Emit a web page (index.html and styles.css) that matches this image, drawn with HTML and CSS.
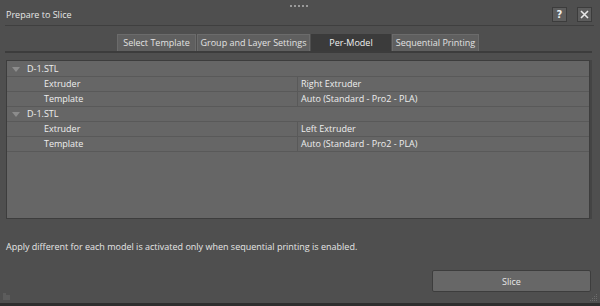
FILE: index.html
```html
<!DOCTYPE html>
<html lang="en">
<head>
    <meta charset="UTF-8">
    <title>Prepare to Slice</title>
    <link rel="stylesheet" href="styles.css">
</head>
<body>
    <div class="dialog">
        <svg class="grip" width="18" height="4" viewBox="0 0 18 4">
            <rect x="0" y="1" width="2" height="2" fill="#9a9a9a"/>
            <rect x="4" y="1" width="2" height="2" fill="#9a9a9a"/>
            <rect x="8" y="1" width="2" height="2" fill="#9a9a9a"/>
            <rect x="12" y="1" width="2" height="2" fill="#9a9a9a"/>
            <rect x="16" y="1" width="2" height="2" fill="#9a9a9a"/>
        </svg>
        <div class="titlebar">
            <span class="title">Prepare to Slice</span>
            <div class="title-buttons">
                <button class="icon-btn">?</button>
                <button class="icon-btn">
                    <svg width="9" height="9" viewBox="0 0 9 9"><path d="M1 1 L8 8 M8 1 L1 8" stroke="#e8e8e8" stroke-width="1.6"/></svg>
                </button>
            </div>
        </div>

        <div class="tabs">
            <div class="tab">Select Template</div>
            <div class="tab">Group and Layer Settings</div>
            <div class="tab active">Per-Model</div>
            <div class="tab">Sequential Printing</div>
        </div>

        <div class="tree">
            <div class="row group"><span class="arrow"></span>D-1.STL</div>
            <div class="row child"><span class="key">Extruder</span><span class="val">Right Extruder</span></div>
            <div class="row child"><span class="key">Template</span><span class="val">Auto (Standard - Pro2 - PLA)</span></div>
            <div class="row group"><span class="arrow"></span>D-1.STL</div>
            <div class="row child"><span class="key">Extruder</span><span class="val">Left Extruder</span></div>
            <div class="row child"><span class="key">Template</span><span class="val">Auto (Standard - Pro2 - PLA)</span></div>
        </div>

        <p class="note">Apply different for each model is activated only when sequential printing is enabled.</p>

        <div class="footer">
            <button class="slice-btn">Slice</button>
        </div>

        <svg class="corner-left" width="7" height="7" viewBox="0 0 7 7">
            <rect x="0" y="2" width="7" height="5" fill="#5c5c5c"/>
            <rect x="0" y="0" width="3" height="2" fill="#5c5c5c"/>
        </svg>
        <svg class="corner-right" width="9" height="9" viewBox="0 0 9 9">
            <rect x="7" y="1" width="1" height="1" fill="#6c6c6c"/>
            <rect x="5" y="3" width="1" height="1" fill="#6c6c6c"/>
            <rect x="7" y="3" width="1" height="1" fill="#6c6c6c"/>
            <rect x="3" y="5" width="1" height="1" fill="#6c6c6c"/>
            <rect x="5" y="5" width="1" height="1" fill="#6c6c6c"/>
            <rect x="7" y="5" width="1" height="1" fill="#6c6c6c"/>
            <rect x="1" y="7" width="1" height="1" fill="#6c6c6c"/>
            <rect x="3" y="7" width="1" height="1" fill="#6c6c6c"/>
            <rect x="5" y="7" width="1" height="1" fill="#6c6c6c"/>
            <rect x="7" y="7" width="1" height="1" fill="#6c6c6c"/>
        </svg>
    </div>
</body>
</html>
```

FILE: styles.css
```css
html, body {
    margin: 0;
    padding: 0;
}

body {
    width: 600px;
    height: 306px;
    background: #2e2e2e;
    font-family: 'Open Sans', 'Noto Sans', sans-serif;
    font-size: 9px;
    color: #e6e6e6;
    overflow: hidden;
}

.dialog {
    height: 303px;
    background: #4f4f4f;
    display: flex;
    flex-direction: column;
    position: relative;
}

.grip {
    position: absolute;
    top: 4px;
    left: 290px;
}

.corner-left {
    position: absolute;
    left: 3px;
    bottom: 3px;
}

.corner-right {
    position: absolute;
    right: 2px;
    bottom: 1px;
}

.titlebar {
    height: 25px;
    margin: 0 6px 0 5px;
    border-bottom: 1px solid #3f3f3f;
    display: flex;
    align-items: center;
    justify-content: space-between;
    padding-left: 1px;
}

.title {
    font-size: 9px;
    padding-top: 3px;
}

.title-buttons {
    display: flex;
    gap: 10px;
    margin-right: 2px;
    margin-top: 4px;
}

.icon-btn {
    width: 15px;
    height: 15px;
    padding: 0;
    background: #5d5d5d;
    border: 1px solid #3c3c3c;
    color: #eee;
    font-family: 'DejaVu Sans', sans-serif;
    font-weight: bold;
    font-size: 10px;
    line-height: 13px;
    display: flex;
    align-items: center;
    justify-content: center;
}

.tabs {
    display: flex;
    margin: 8px 8px 0 5px;
    padding-left: 112px;
    border-bottom: 2px solid #3c3c3c;
}

.tab {
    box-sizing: border-box;
    height: 17px;
    line-height: 16px;
    white-space: nowrap;
    text-align: center;
    background: #5f5f5f;
    border: 1px solid #6b6b6b;
    border-bottom: none;
    color: #e2e2e2;
    margin-right: 1px;
}

.tab:nth-child(1) { width: 79px; }
.tab:nth-child(2) { width: 113px; }
.tab:nth-child(3) { width: 80px; }
.tab:nth-child(4) { width: 87px; }

.tab.active {
    background: #3b3b3b;
    border-color: #3b3b3b;
    color: #f0f0f0;
}

.tree {
    margin: 7px 10px 0 6px;
    height: 156px;
    background: #666666;
    border: 1px solid #3d3d3d;
    box-shadow: 2px 0 0 #444;
    padding-top: 1px;
}

.row {
    height: 14px;
    line-height: 14px;
    border-bottom: 1px solid #595959;
    display: flex;
    color: #eeeeee;
}

.group {
    padding-left: 5px;
}

.arrow {
    width: 0;
    height: 0;
    border-left: 4px solid transparent;
    border-right: 4px solid transparent;
    border-top: 5px solid #8c8c8c;
    margin: 5px 7px 0 0;
}

.child .key {
    width: 253px;
    padding-left: 37px;
    border-right: 1px solid #595959;
}

.child .val {
    padding-left: 3px;
}

.note {
    margin: 21px 0 0 6px;
    font-size: 9px;
}

.footer {
    margin-top: auto;
    display: flex;
    justify-content: flex-end;
    padding: 0 9px 11px 0;
}

.slice-btn {
    width: 159px;
    height: 22px;
    background: #676767;
    border: 1px solid #3d3d3d;
    border-radius: 2px;
    color: #e8e8e8;
    font-family: 'Open Sans', 'Noto Sans', sans-serif;
    font-size: 9px;
}
```
